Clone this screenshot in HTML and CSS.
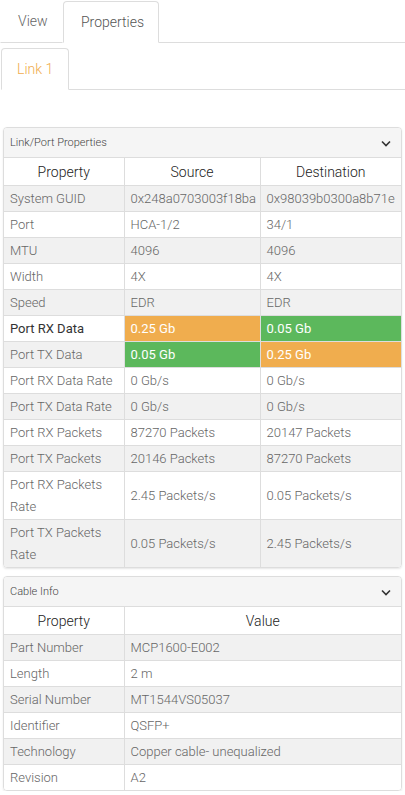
FILE: index.html
```html
<!DOCTYPE html>
<html>
<head>
<meta charset="utf-8">
<link rel="stylesheet" href="styles.css">
</head>
<body>
<div class="page">
  <div class="tabs top-tabs">
    <div class="tab">View</div>
    <div class="tab active">Properties</div>
    <div class="tab-fill"></div>
  </div>
  <div class="tabs sub-tabs">
    <div class="tab active link">Link 1</div>
    <div class="tab-fill"></div>
  </div>

  <div class="panel first">
    <div class="panel-head">
      <span>Link/Port Properties</span>
      <svg class="chev" width="10" height="7" viewBox="0 0 10 7"><path d="M1 1.5 L5 5.5 L9 1.5" fill="none" stroke="#333" stroke-width="1.6"/></svg>
    </div>
    <table class="grid three">
      <colgroup><col class="c1"><col class="c2"><col class="c3"></colgroup>
      <thead><tr><th>Property</th><th>Source</th><th>Destination</th></tr></thead>
      <tbody>
        <tr><td>System GUID</td><td>0x248a0703003f18ba</td><td>0x98039b0300a8b71e</td></tr>
        <tr><td>Port</td><td>HCA-1/2</td><td>34/1</td></tr>
        <tr><td>MTU</td><td>4096</td><td>4096</td></tr>
        <tr><td>Width</td><td>4X</td><td>4X</td></tr>
        <tr><td>Speed</td><td>EDR</td><td>EDR</td></tr>
        <tr class="hl"><td class="dark">Port RX Data</td><td class="orange">0.25 Gb</td><td class="green">0.05 Gb</td></tr>
        <tr><td>Port TX Data</td><td class="green">0.05 Gb</td><td class="orange">0.25 Gb</td></tr>
        <tr><td>Port RX Data Rate</td><td>0 Gb/s</td><td>0 Gb/s</td></tr>
        <tr><td>Port TX Data Rate</td><td>0 Gb/s</td><td>0 Gb/s</td></tr>
        <tr><td>Port RX Packets</td><td>87270 Packets</td><td>20147 Packets</td></tr>
        <tr><td>Port TX Packets</td><td>20146 Packets</td><td>87270 Packets</td></tr>
        <tr><td>Port RX Packets Rate</td><td>2.45 Packets/s</td><td>0.05 Packets/s</td></tr>
        <tr><td>Port TX Packets Rate</td><td>0.05 Packets/s</td><td>2.45 Packets/s</td></tr>
      </tbody>
    </table>
  </div>

  <div class="panel second">
    <div class="panel-head">
      <span>Cable Info</span>
      <svg class="chev" width="10" height="7" viewBox="0 0 10 7"><path d="M1 1.5 L5 5.5 L9 1.5" fill="none" stroke="#333" stroke-width="1.6"/></svg>
    </div>
    <table class="grid two">
      <colgroup><col class="c1"><col></colgroup>
      <thead><tr><th>Property</th><th>Value</th></tr></thead>
      <tbody>
        <tr><td>Part Number</td><td>MCP1600-E002</td></tr>
        <tr><td>Length</td><td>2 m</td></tr>
        <tr><td>Serial Number</td><td>MT1544VS05037</td></tr>
        <tr><td>Identifier</td><td>QSFP+</td></tr>
        <tr><td>Technology</td><td>Copper cable- unequalized</td></tr>
        <tr><td>Revision</td><td>A2</td></tr>
      </tbody>
    </table>
  </div>
</div>
</body>
</html>
```

FILE: styles.css
```css
html, body {
  margin: 0;
  padding: 0;
  background: #fff;
}
body {
  font-family: Roboto, "Liberation Sans", sans-serif;
  color: #666;
  width: 405px;
}
.page {
  display: flex;
  flex-direction: column;
}
.tabs {
  display: flex;
  align-items: flex-end;
}
.tab-fill {
  flex: 1;
  border-bottom: 1px solid #ddd;
  align-self: stretch;
}
.tab {
  font-size: 14px;
  padding: 0 17px;
  height: 42px;
  line-height: 40px;
  color: #666;
  border: 1px solid transparent;
  border-bottom: 1px solid #ddd;
  box-sizing: border-box;
  font-weight: 300;
  white-space: nowrap;
}
.top-tabs {
  height: 43px;
}
.top-tabs .tab {
  height: 43px;
}
.top-tabs .tab:first-child {
  width: 63px;
}
.top-tabs .tab.active {
  width: 96px;
  border: 1px solid #ddd;
  border-bottom-color: transparent;
  border-radius: 4px 4px 0 0;
  color: #555;
  margin-top: 1px;
  height: 42px;
}
.sub-tabs {
  margin-top: 5px;
  height: 42px;
}
.sub-tabs .tab.link {
  margin-left: 1px;
  width: 68px;
  padding: 0 0 0 15px;
  border: 1px solid #ddd;
  border-bottom-color: transparent;
  border-radius: 4px 4px 0 0;
  color: #f0ad4e;
  height: 42px;
}
.panel {
  margin: 0 3px 0 3px;
  border: 1px solid #ddd;
  border-radius: 4px;
  box-shadow: 0 1px 2px rgba(0,0,0,0.1);
  overflow: hidden;
}
.panel.first {
  margin-top: 37px;
}
.panel.second {
  margin-top: 8px;
}
.panel-head {
  height: 30px;
  background: #f5f5f5;
  border-bottom: 1px solid #ddd;
  display: flex;
  align-items: center;
  justify-content: space-between;
  padding: 0 10px 0 6px;
  font-size: 11px;
  font-weight: 300;
  color: #444;
  box-sizing: border-box;
}
.chev {
  margin-top: 2px;
}
.grid {
  width: 100%;
  border-collapse: collapse;
  table-layout: fixed;
  font-size: 13px;
  font-weight: 300;
}
.grid col.c1 { width: 120px; }
.three col.c2 { width: 136px; }
.grid th {
  font-weight: 300;
  font-size: 14px;
  color: #222;
  text-align: center;
  height: 27px;
  padding: 0;
  border-left: 1px solid #ddd;
  border-bottom: 1px solid #ddd;
  background: #fff;
}
.grid td {
  line-height: 22px;
  padding: 2px 6px 1px 6px;
  border-left: 1px solid #ddd;
  border-top: 1px solid #ddd;
  white-space: normal;
  color: #666;
}
.grid th:first-child, .grid td:first-child {
  border-left: none;
}
.grid tbody tr:first-child td {
  border-top: none;
}
.grid tbody tr:nth-child(odd) td {
  background: #f1f1f1;
}
.grid tbody tr:nth-child(even) td {
  background: #fff;
}
.grid tbody tr td.dark {
  color: #333;
  font-weight: 400;
  background: #fff;
}
.grid tbody tr td.orange {
  background: #f0ad4e;
  color: #fff;
  font-weight: 400;
}
.grid tbody tr td.green {
  background: #5cb85c;
  color: #fff;
  font-weight: 400;
}
.two td {
  white-space: nowrap;
}
```
